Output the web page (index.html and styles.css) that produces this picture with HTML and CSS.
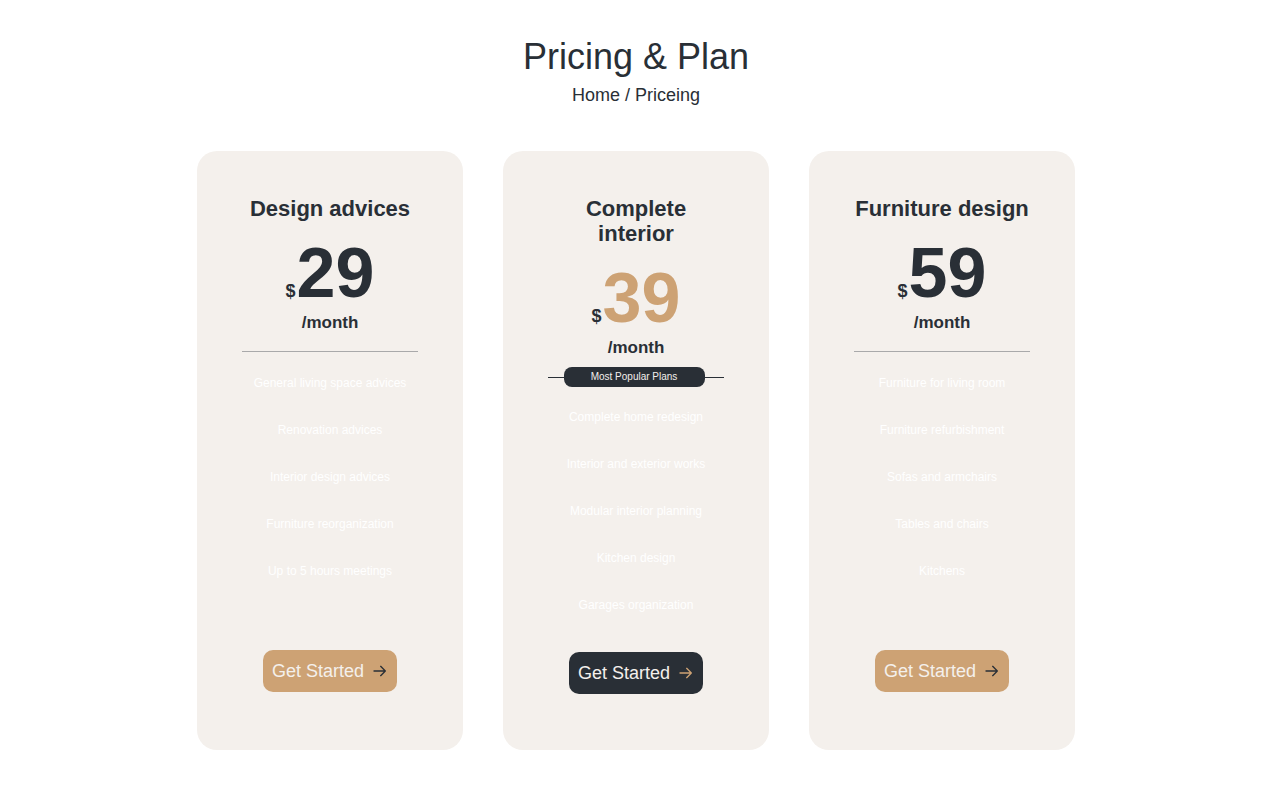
FILE: index.html
```html
<!DOCTYPE html>
<html lang="en">
<head>
<meta charset="utf-8">
<title>Pricing &amp; Plan</title>
<link rel="stylesheet" href="styles.css">
</head>
<body>
<header class="page-head">
  <h1 class="page-title">Pricing &amp; Plan</h1>
  <p class="crumbs">Home / Priceing</p>
</header>
<main class="plans">
  <section class="card">
    <h3 class="plan-name">Design advices</h3>
    <div class="price"><span class="cur">$</span><span class="amount">29</span></div>
    <div class="period">/month</div>
    <div class="divider"></div>
    <ul class="features">
      <li>General living space advices</li>
      <li>Renovation advices</li>
      <li>Interior design advices</li>
      <li>Furniture reorganization</li>
      <li>Up to 5 hours meetings</li>
    </ul>
    <a class="btn btn-tan" href="#">Get Started
      <svg class="arrow" viewBox="0 0 24 24" width="16" height="16"><path d="M3 12h17M13 5l7 7-7 7" fill="none" stroke="currentColor" stroke-width="2" stroke-linecap="round" stroke-linejoin="round"/></svg>
    </a>
  </section>
  <section class="card card-popular">
    <h3 class="plan-name">Complete interior</h3>
    <div class="price"><span class="cur">$</span><span class="amount amount-tan">39</span></div>
    <div class="period">/month</div>
    <div class="popular"><span class="badge">Most Popular Plans</span></div>
    <ul class="features">
      <li>Complete home redesign</li>
      <li>Interior and exterior works</li>
      <li>Modular interior planning</li>
      <li>Kitchen design</li>
      <li>Garages organization</li>
    </ul>
    <a class="btn btn-dark" href="#">Get Started
      <svg class="arrow" viewBox="0 0 24 24" width="16" height="16"><path d="M3 12h17M13 5l7 7-7 7" fill="none" stroke="currentColor" stroke-width="2" stroke-linecap="round" stroke-linejoin="round"/></svg>
    </a>
  </section>
  <section class="card">
    <h3 class="plan-name">Furniture design</h3>
    <div class="price"><span class="cur">$</span><span class="amount">59</span></div>
    <div class="period">/month</div>
    <div class="divider"></div>
    <ul class="features">
      <li>Furniture for living room</li>
      <li>Furniture refurbishment</li>
      <li>Sofas and armchairs</li>
      <li>Tables and chairs</li>
      <li>Kitchens</li>
    </ul>
    <a class="btn btn-tan" href="#">Get Started
      <svg class="arrow" viewBox="0 0 24 24" width="16" height="16"><path d="M3 12h17M13 5l7 7-7 7" fill="none" stroke="currentColor" stroke-width="2" stroke-linecap="round" stroke-linejoin="round"/></svg>
    </a>
  </section>
</main>
</body>
</html>
```

FILE: styles.css
```css
* { box-sizing: border-box; }

body {
  margin: 0;
  background: #ffffff;
  color: #292f36;
  font-family: "Liberation Sans", Arial, sans-serif;
}

.page-head {
  text-align: center;
  padding-top: 36px;
}

.page-title {
  margin: 0;
  font-size: 36px;
  line-height: 42px;
  font-weight: 400;
  color: #292f36;
}

.crumbs {
  margin: 6px 0 0;
  font-size: 18px;
  line-height: 22px;
  color: #292f36;
}

.plans {
  display: flex;
  justify-content: center;
  gap: 40px;
  margin-top: 45px;
}

.card {
  width: 266px;
  height: 599px;
  background: #f4f0ec;
  border-radius: 20px;
  padding: 45px 45px 58px;
  display: flex;
  flex-direction: column;
  align-items: center;
  text-align: center;
}

.card-popular {
  padding-bottom: 56px;
}

.plan-name {
  margin: 0;
  font-size: 22px;
  line-height: 25px;
  font-weight: 700;
  color: #292f36;
}

.price {
  margin-top: 17px;
  display: flex;
  align-items: baseline;
  line-height: 70px;
  height: 70px;
}

.cur {
  font-size: 18px;
  font-weight: 700;
  margin-right: 1px;
}

.amount {
  font-size: 70px;
  font-weight: 700;
  color: #292f36;
}

.amount-tan {
  color: #cda274;
}

.period {
  margin-top: 5px;
  font-size: 17px;
  line-height: 20px;
  font-weight: 700;
}

.divider {
  align-self: stretch;
  margin-top: 18px;
  height: 1px;
  background: #a9a9aa;
}

.popular {
  align-self: stretch;
  margin-top: 9px;
  height: 20px;
  position: relative;
  display: flex;
  justify-content: center;
}

.popular::before {
  content: "";
  position: absolute;
  left: 0;
  right: 0;
  top: 10px;
  height: 1px;
  background: #292f36;
}

.badge {
  position: relative;
  left: -2px;
  background: #292f36;
  color: #f4f0ec;
  font-size: 10px;
  line-height: 20px;
  height: 20px;
  width: 141px;
  border-radius: 8px;
}

.features {
  list-style: none;
  margin: 24px 0 0;
  padding: 0;
  display: flex;
  flex-direction: column;
  gap: 33px;
}

.card-popular .features {
  margin-top: 23px;
}

.features li {
  font-size: 12px;
  line-height: 14px;
  color: #ffffff;
}

.btn {
  margin-top: auto;
  height: 42px;
  padding: 0 9px;
  display: flex;
  align-items: center;
  gap: 8px;
  font-size: 18px;
  border-radius: 10px;
  text-decoration: none;
}

.btn-tan {
  background: #cda274;
  color: #f4f0ec;
}

.btn-tan .arrow { color: #292f36; }

.btn-dark {
  background: #292f36;
  color: #f4f0ec;
}

.btn-dark .arrow { color: #cda274; }
```
